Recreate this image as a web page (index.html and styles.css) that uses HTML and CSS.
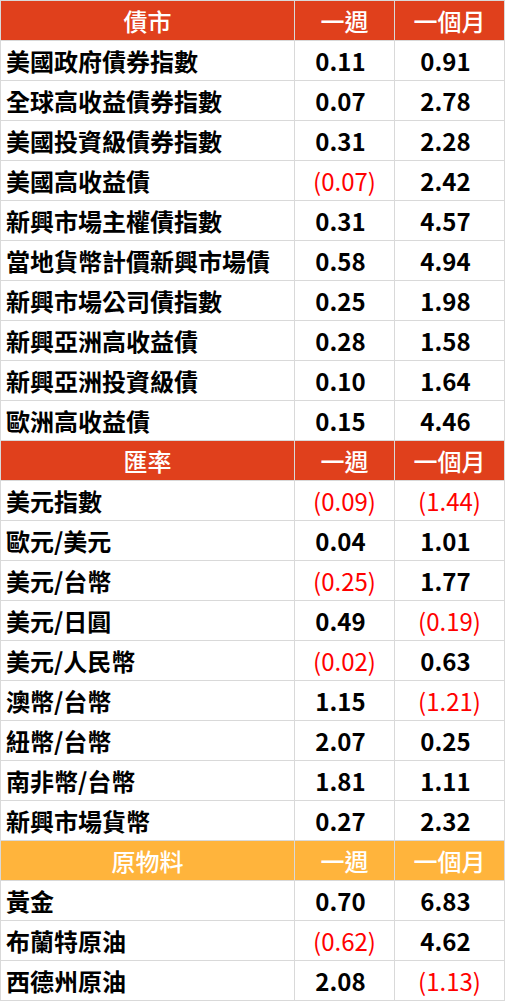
FILE: index.html
```html
<!DOCTYPE html>
<html lang="zh-Hant">
<head>
<meta charset="utf-8">
<link rel="stylesheet" href="styles.css">
</head>
<body>
<div class="table">
  <div class="hd red name">債市</div><div class="hd red">一週</div><div class="hd red">一個月</div>
  <div class="name">美國政府債券指數</div><div class="num">0.11</div><div class="num">0.91</div>
  <div class="name">全球高收益債券指數</div><div class="num">0.07</div><div class="num">2.78</div>
  <div class="name">美國投資級債券指數</div><div class="num">0.31</div><div class="num">2.28</div>
  <div class="name">美國高收益債</div><div class="neg">(0.07)</div><div class="num">2.42</div>
  <div class="name">新興市場主權債指數</div><div class="num">0.31</div><div class="num">4.57</div>
  <div class="name">當地貨幣計價新興市場債</div><div class="num">0.58</div><div class="num">4.94</div>
  <div class="name">新興市場公司債指數</div><div class="num">0.25</div><div class="num">1.98</div>
  <div class="name">新興亞洲高收益債</div><div class="num">0.28</div><div class="num">1.58</div>
  <div class="name">新興亞洲投資級債</div><div class="num">0.10</div><div class="num">1.64</div>
  <div class="name">歐洲高收益債</div><div class="num">0.15</div><div class="num">4.46</div>
  <div class="hd red name">匯率</div><div class="hd red">一週</div><div class="hd red">一個月</div>
  <div class="name">美元指數</div><div class="neg">(0.09)</div><div class="neg">(1.44)</div>
  <div class="name">歐元/美元</div><div class="num">0.04</div><div class="num">1.01</div>
  <div class="name">美元/台幣</div><div class="neg">(0.25)</div><div class="num">1.77</div>
  <div class="name">美元/日圓</div><div class="num">0.49</div><div class="neg">(0.19)</div>
  <div class="name">美元/人民幣</div><div class="neg">(0.02)</div><div class="num">0.63</div>
  <div class="name">澳幣/台幣</div><div class="num">1.15</div><div class="neg">(1.21)</div>
  <div class="name">紐幣/台幣</div><div class="num">2.07</div><div class="num">0.25</div>
  <div class="name">南非幣/台幣</div><div class="num">1.81</div><div class="num">1.11</div>
  <div class="name">新興市場貨幣</div><div class="num">0.27</div><div class="num">2.32</div>
  <div class="hd orange name">原物料</div><div class="hd orange">一週</div><div class="hd orange">一個月</div>
  <div class="name">黃金</div><div class="num">0.70</div><div class="num">6.83</div>
  <div class="name">布蘭特原油</div><div class="neg">(0.62)</div><div class="num">4.62</div>
  <div class="name">西德州原油</div><div class="num">2.08</div><div class="neg">(1.13)</div>
</div>
</body>
</html>
```

FILE: styles.css
```css
html, body {
  margin: 0;
  padding: 0;
  background: #ffffff;
}
.table {
  display: grid;
  grid-template-columns: 293px 99px 109px;
  grid-auto-rows: 39px;
  gap: 1px;
  padding: 1px;
  width: 503px;
  background: #d9d9d9;
  font-family: "Noto Sans CJK TC", "Noto Sans", sans-serif;
  font-size: 24px;
  line-height: 40px;
}
.table > div {
  background: #ffffff;
  color: #000000;
  text-align: center;
  white-space: nowrap;
  overflow: hidden;
}
.table > .name {
  text-align: left;
  padding-left: 5px;
  font-weight: 700;
}
.table > .num {
  font-weight: 700;
  padding-right: 8px;
}
.table > .neg {
  color: #ff0000;
  font-weight: 400;
}
.table > .hd {
  color: #ffffff;
  font-weight: 500;
  text-align: center;
  padding: 0;
}
.table > .red {
  background: #e0401c;
}
.table > .orange {
  background: #ffb43c;
}
```
